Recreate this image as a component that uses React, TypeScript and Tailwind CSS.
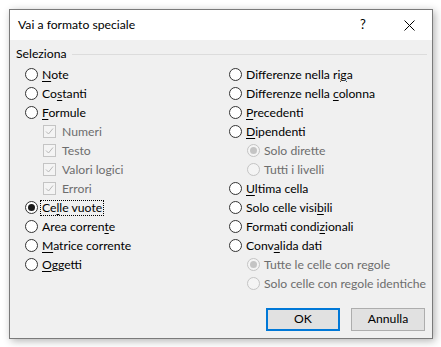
import React from "react";

type Item = {
  label: React.ReactNode;
  kind: "radio" | "check" | "subradio";
  checked?: boolean;
  disabled?: boolean;
  focused?: boolean;
};

const U = ({ children }: { children: React.ReactNode }) => <span className="underline underline-offset-[2px]">{children}</span>;

const leftItems: Item[] = [
  { label: <><U>N</U>ote</>, kind: "radio" },
  { label: <>Co<U>s</U>tanti</>, kind: "radio" },
  { label: <><U>F</U>ormule</>, kind: "radio" },
  { label: "Numeri", kind: "check", checked: true, disabled: true },
  { label: "Testo", kind: "check", checked: true, disabled: true },
  { label: "Valori logici", kind: "check", checked: true, disabled: true },
  { label: "Errori", kind: "check", checked: true, disabled: true },
  { label: <>Ce<U>l</U>le vuote</>, kind: "radio", checked: true, focused: true },
  { label: <>Area corren<U>t</U>e</>, kind: "radio" },
  { label: <><U>M</U>atrice corrente</>, kind: "radio" },
  { label: <><U>O</U>ggetti</>, kind: "radio" },
];

const rightItems: Item[] = [
  { label: <>Differenze nella ri<U>g</U>a</>, kind: "radio" },
  { label: <>Differenze nella <U>c</U>olonna</>, kind: "radio" },
  { label: <><U>P</U>recedenti</>, kind: "radio" },
  { label: <><U>D</U>ipendenti</>, kind: "radio" },
  { label: "Solo dirette", kind: "subradio", checked: true, disabled: true },
  { label: "Tutti i livelli", kind: "subradio", disabled: true },
  { label: <><U>U</U>ltima cella</>, kind: "radio" },
  { label: <>Solo celle visi<U>b</U>ili</>, kind: "radio" },
  { label: <>Formati condi<U>z</U>ionali</>, kind: "radio" },
  { label: <>Conv<U>a</U>lida dati</>, kind: "radio" },
  { label: "Tutte le celle con regole", kind: "subradio", checked: true, disabled: true },
  { label: "Solo celle con regole identiche", kind: "subradio", disabled: true },
];

function Radio({ checked, disabled }: { checked?: boolean; disabled?: boolean }) {
  return (
    <span
      className={`flex h-[13px] w-[13px] shrink-0 items-center justify-center rounded-full border ${
        disabled ? "border-[#c4c4c4] bg-[#f4f4f4]" : "border-[#333333] bg-white"
      }`}
    >
      {checked && (
        <span className={`h-[7px] w-[7px] rounded-full ${disabled ? "bg-[#c4c4c4]" : "bg-[#1a1a1a]"}`} />
      )}
    </span>
  );
}

function Check() {
  return (
    <span className="flex h-[13px] w-[13px] shrink-0 items-center justify-center border border-[#c4c4c4] bg-[#f4f4f4]">
      <svg width="9" height="9" viewBox="0 0 9 9" fill="none">
        <path d="M1 4.5 L3.5 7 L8 1.5" stroke="#b8b8b8" strokeWidth="1" />
      </svg>
    </span>
  );
}

function Row({ item }: { item: Item }) {
  const sub = item.kind !== "radio";
  return (
    <div className={`flex h-[19px] items-center ${sub ? "pl-[18px]" : ""}`}>
      {item.kind === "check" ? <Check /> : <Radio checked={item.checked} disabled={item.disabled} />}
      <span
        className={`${item.kind === "check" ? "ml-[4px]" : "ml-[2px]"} whitespace-nowrap px-px leading-[14px] ${
          item.focused ? "border border-dotted border-black" : "border border-transparent"
        } ${item.disabled ? "text-[#6d6d6d]" : "text-black"}`}
      >
        {item.label}
      </span>
    </div>
  );
}

export default function App() {
  return (
    <div className="min-h-screen bg-white pl-[9px] pt-[9px] text-[12.2px] font-['Lato',sans-serif]">
      <div className="flex h-[330px] w-[424px] flex-col border border-[#7a7a7a] bg-[#f0f0f0] shadow-[2px_2px_8px_rgba(0,0,0,0.3)]">
        {/* title bar */}
        <div className="flex h-[30px] items-center bg-white">
          <span className="pl-[8px] text-black">Vai a formato speciale</span>
          <div className="ml-auto flex h-full">
            <span className="flex w-[46px] items-center justify-center text-[13px] text-black">?</span>
            <span className="flex w-[46px] items-center justify-center">
              <svg width="11" height="11" viewBox="0 0 11 11">
                <path d="M0.5 0.5 L10.5 10.5 M10.5 0.5 L0.5 10.5" stroke="#000" strokeWidth="1" />
              </svg>
            </span>
          </div>
        </div>

        {/* body */}
        <div className="flex flex-1 flex-col">
          <div className="mt-[5px] flex h-[18px] items-center pl-[6px] pr-[5px]">
            <span className="text-black">Seleziona</span>
            <span className="ml-[5px] h-px flex-1 bg-[#dcdcdc]" />
          </div>
          <div className="mt-[2px] grid grid-cols-[204px_1fr] pl-[15px]">
            <div className="flex flex-col">
              {leftItems.map((it, i) => (
                <Row key={i} item={it} />
              ))}
            </div>
            <div className="flex flex-col">
              {rightItems.map((it, i) => (
                <Row key={i} item={it} />
              ))}
            </div>
          </div>
          <div className="mb-[7px] mt-auto flex justify-end gap-[11px] pr-[7px]">
            <button className="h-[23px] w-[74px] border-2 border-[#0078d7] bg-[#e1e1e1] text-black">OK</button>
            <button className="h-[23px] w-[74px] border border-[#adadad] bg-[#e1e1e1] text-black">Annulla</button>
          </div>
        </div>
      </div>
    </div>
  );
}
